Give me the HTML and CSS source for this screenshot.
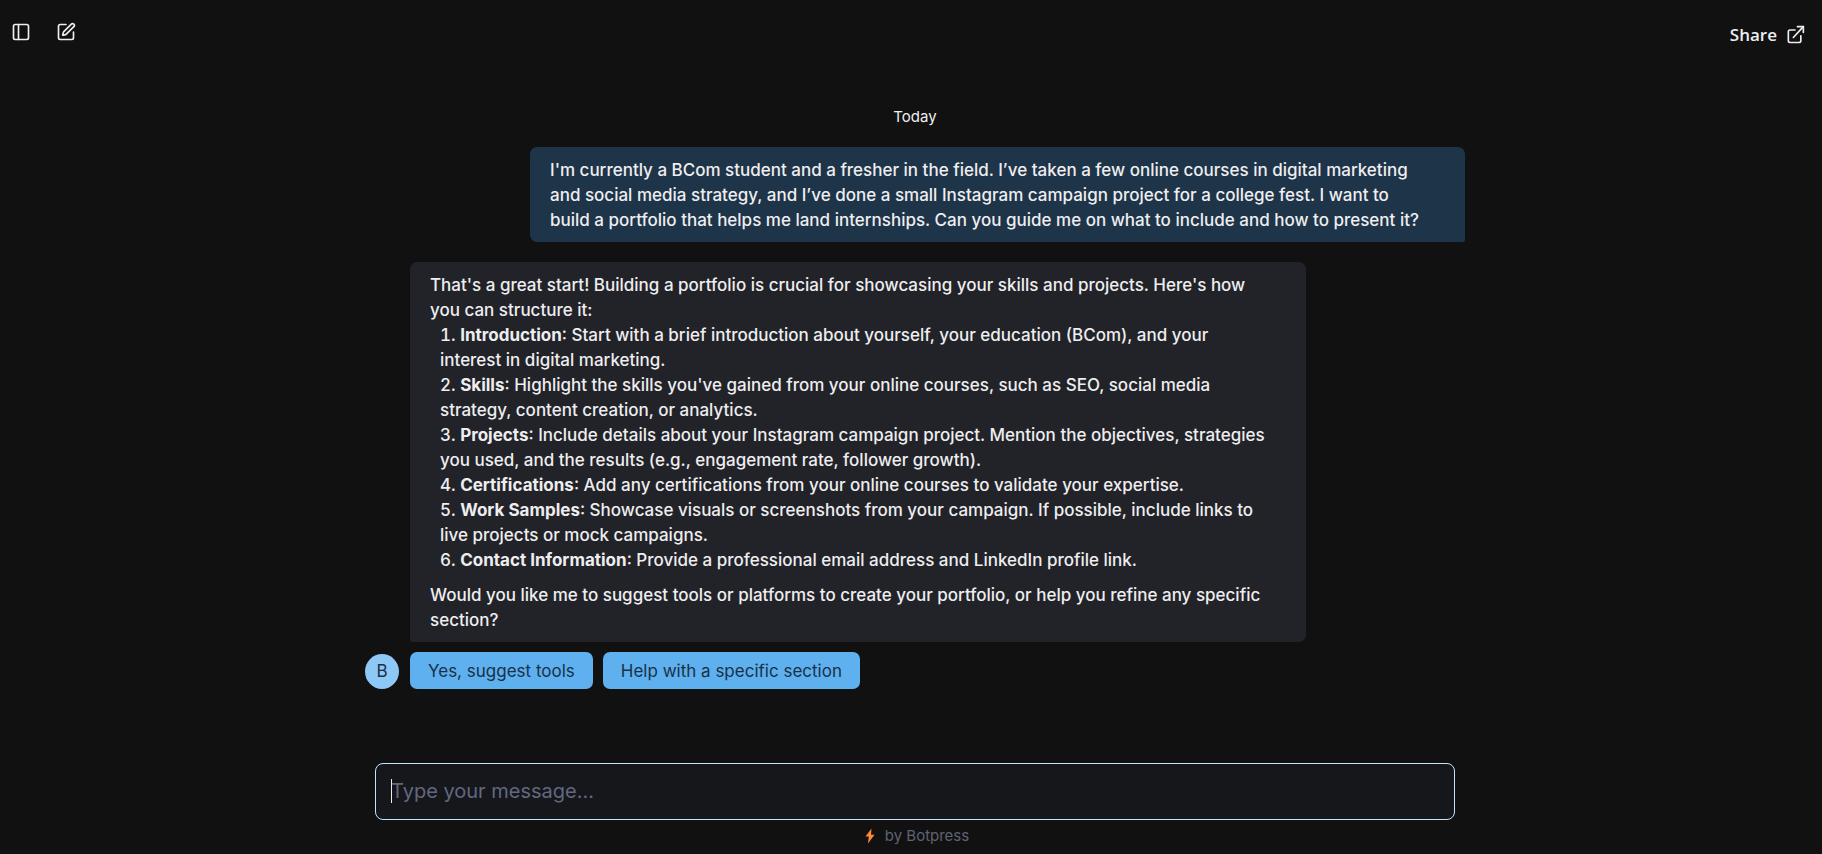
FILE: index.html
```html
<!DOCTYPE html>
<html lang="en">
<head>
<meta charset="utf-8">
<meta name="viewport" content="width=device-width, initial-scale=1">
<title>Chat</title>
<link rel="stylesheet" href="styles.css">
</head>
<body>
<div class="app">
  <header class="topbar">
    <div class="topbar-tools">
      <button class="icon-button" type="button" aria-label="Toggle sidebar">
        <svg class="icon" viewBox="0 0 24 24"><rect x="3" y="3" width="18" height="18" rx="2"/><path d="M9 3v18"/></svg>
      </button>
      <button class="icon-button" type="button" aria-label="New conversation">
        <svg class="icon" viewBox="0 0 24 24"><path d="M12 3H5a2 2 0 0 0-2 2v14a2 2 0 0 0 2 2h14a2 2 0 0 0 2-2v-7"/><path d="M18.375 2.625a1 1 0 0 1 3 3l-9.013 9.014a2 2 0 0 1-.853.505l-2.873.84a.5.5 0 0 1-.62-.62l.84-2.873a2 2 0 0 1 .506-.852z"/></svg>
      </button>
    </div>
    <button class="share" type="button">
      Share
      <svg class="icon" viewBox="0 0 24 24"><path d="M12 6H6a2 2 0 0 0-2 2v11a2 2 0 0 0 2 2h11a2 2 0 0 0 2-2v-6"/><path d="M10 15L22 2"/><path d="M15 2h7v7"/></svg>
    </button>
  </header>

  <main class="thread">
    <p class="day">Today</p>
    <div class="bubble bubble-user">I'm currently a BCom student and a fresher in the field. I’ve taken a few online courses in digital marketing and social media strategy, and I’ve done a small Instagram campaign project for a college fest. I want to build a portfolio that helps me land internships. Can you guide me on what to include and how to present it?</div>
    <div class="bot-row">
      <div class="avatar">B</div>
      <div class="bot-content">
        <div class="bubble bubble-bot">
          <p>That's a great start! Building a portfolio is crucial for showcasing your skills and projects. Here's how you can structure it:</p>
          <ol class="steps">
            <li><strong>Introduction</strong>: Start with a brief introduction about yourself, your education (BCom), and your interest in digital marketing.</li>
            <li><strong>Skills</strong>: Highlight the skills you've gained from your online courses, such as SEO, social media strategy, content creation, or analytics.</li>
            <li><strong>Projects</strong>: Include details about your Instagram campaign project. Mention the objectives, strategies you used, and the results (e.g., engagement rate, follower growth).</li>
            <li><strong>Certifications</strong>: Add any certifications from your online courses to validate your expertise.</li>
            <li><strong>Work Samples</strong>: Showcase visuals or screenshots from your campaign. If possible, include links to live projects or mock campaigns.</li>
            <li><strong>Contact Information</strong>: Provide a professional email address and LinkedIn profile link.</li>
          </ol>
          <p>Would you like me to suggest tools or platforms to create your portfolio, or help you refine any specific section?</p>
        </div>
        <div class="choices">
          <button class="choice" type="button">Yes, suggest tools</button>
          <button class="choice" type="button">Help with a specific section</button>
        </div>
      </div>
    </div>
  </main>

  <footer class="composer">
    <div class="field">
      <input class="message" type="text" aria-label="Message" placeholder="Type your message...">
      <span class="caret"></span>
    </div>
    <a class="brand" href="#">
      <svg class="bolt" viewBox="0 0 10 16"><path d="M6.5 0.5 0.5 8.5h3.3L3 15.5l6.5-8.8H6z"/></svg>
      by Botpress
    </a>
  </footer>
</div>
</body>
</html>
```
FILE: styles.css
```css
* {
  box-sizing: border-box;
}

body {
  margin: 0;
  background: #111111;
  color: #eeeef0;
  font-family: Inter, "Liberation Sans", sans-serif;
  font-size: 17px;
  line-height: 25px;
}

p,
ol {
  margin: 0;
  padding: 0;
}

button {
  border: 0;
  background: none;
  padding: 0;
  color: inherit;
  font: inherit;
  cursor: pointer;
}

.app {
  display: flex;
  flex-direction: column;
  min-height: 100vh;
}

.topbar {
  display: flex;
  justify-content: space-between;
  align-items: flex-start;
  padding: 22px 17px 0 11px;
}

.topbar-tools {
  display: flex;
  gap: 25px;
}

.icon-button {
  display: flex;
}

.icon {
  width: 20px;
  height: 20px;
  fill: none;
  stroke: currentColor;
  stroke-width: 2;
  stroke-linecap: round;
  stroke-linejoin: round;
}

.share {
  display: flex;
  align-items: center;
  gap: 8px;
  font-family: "Open Sans", sans-serif;
  font-weight: 600;
}

.thread {
  display: flex;
  flex-direction: column;
  flex: 1;
  width: 100%;
  max-width: 1108px;
  margin: 0 auto;
  padding: 57px 0 0 8px;
}

.day {
  margin-bottom: 18px;
  font-size: 15px;
  text-align: center;
}

.bubble {
  padding: 11px 40px 9px 20px;
  border-radius: 7px;
  font-weight: 450;
}

.bubble-user {
  align-self: flex-end;
  max-width: 85%;
  background: #1e3448;
  border-bottom-right-radius: 2px;
}

.bot-row {
  display: flex;
  align-items: flex-end;
  gap: 11px;
  margin-top: 20px;
}

.avatar {
  flex: none;
  width: 34px;
  height: 35px;
  border-radius: 50%;
  background: #8ec8f6;
  color: #193048;
  line-height: 35px;
  text-align: center;
}

.bot-content {
  max-width: 896px;
}

.bubble-bot {
  background: #222328;
  border-bottom-left-radius: 2px;
}

.steps {
  margin-bottom: 10px;
  padding-left: 10px;
  list-style-position: inside;
}

.choices {
  display: flex;
  gap: 10px;
  margin-top: 10px;
}

.choice {
  padding: 7px 18px 5px;
  border-radius: 7px;
  background: #5eb0ef;
  color: #193048;
}

.composer {
  width: 100%;
  max-width: 1088px;
  margin: 0 auto;
  padding: 0 0 6px 8px;
}

.field {
  position: relative;
}

.message {
  display: block;
  width: 100%;
  height: 57px;
  padding: 0 15px 2px;
  border: 1px solid #c2e5ff;
  border-radius: 8px;
  outline: 0;
  background: #15171b;
  color: inherit;
  font: inherit;
  font-size: 20px;
}

.message::placeholder {
  color: #636780;
  opacity: 1;
}

.caret {
  position: absolute;
  top: 16px;
  left: 16px;
  width: 1px;
  height: 24px;
  background: #eeeef0;
}

.brand {
  display: flex;
  justify-content: center;
  align-items: center;
  gap: 10px;
  margin-top: 3px;
  padding-left: 4px;
  color: #5f6373;
  font-size: 15px;
  text-decoration: none;
}

.bolt {
  width: 10px;
  height: 16px;
  fill: #ff8b35;
}
```
